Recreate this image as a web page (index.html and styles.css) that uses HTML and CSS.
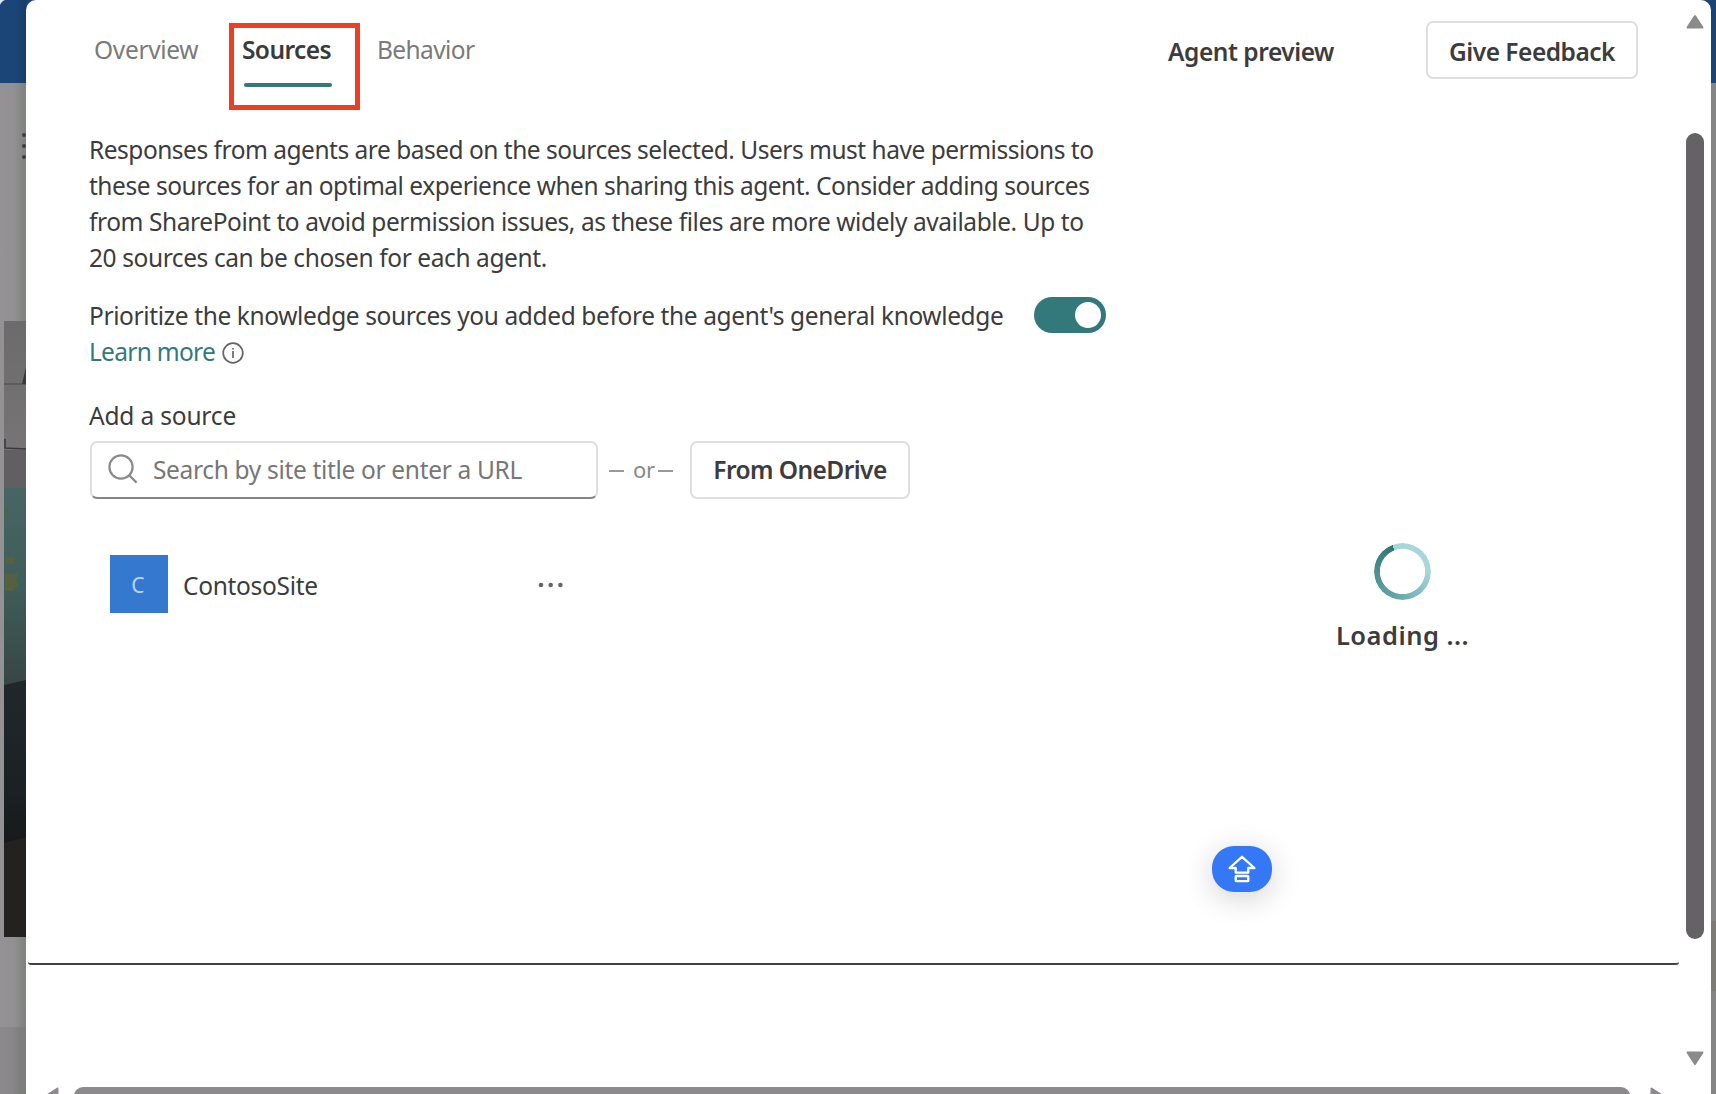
FILE: index.html
```html
<!DOCTYPE html>
<html lang="en">
<head>
<meta charset="utf-8">
<title>Agent sources</title>
<link rel="stylesheet" href="styles.css">
</head>
<body>
<div class="page">
  <aside class="backdrop">
    <div class="suite-bar"></div>
    <div class="rail"><svg class="rail-icon" viewBox="0 0 4 28"><circle cx="2" cy="3" r="2"/><circle cx="2" cy="14" r="2"/><circle cx="2" cy="25" r="2"/></svg></div>
    <svg class="photo" viewBox="0 0 22 616" preserveAspectRatio="none">
      <defs>
        <linearGradient id="wall" x1="0" y1="0" x2="0" y2="1"><stop offset="0" stop-color="#6c6b6b"/><stop offset="1" stop-color="#767475"/></linearGradient>
        <linearGradient id="teal" x1="0" y1="0" x2="0" y2="1"><stop offset="0" stop-color="#466564"/><stop offset=".5" stop-color="#3f5d59"/><stop offset="1" stop-color="#374644"/></linearGradient>
        <linearGradient id="dark" x1="0" y1="0" x2="0" y2="1"><stop offset="0" stop-color="#22272c"/><stop offset=".6" stop-color="#1b2226"/><stop offset="1" stop-color="#181818"/></linearGradient>
      </defs>
      <rect width="22" height="130" fill="url(#wall)"/>
      <path d="M0 63H22" stroke="#555455" stroke-width="1.5"/>
      <path d="M22 46V63H18Z" fill="#3a393a"/>
      <path d="M1 118V127L22 128" stroke="#3a383a" stroke-width="1.5" fill="none"/>
      <rect y="129" width="22" height="39" fill="#625f62"/>
      <rect y="167" width="22" height="198" fill="url(#teal)"/>
      <path d="M1 186l3 5-3 4M1 210l3 3M1 236h10v7H1zM1 253l14-1-3 6 2 6-6 6H1z" fill="#55603f"/>
      <path d="M0 364L22 359V530H0Z" fill="url(#dark)"/>
      <path d="M0 522L22 516V616H0Z" fill="#242220"/>
    </svg>
    <div class="rail-foot"></div>
  </aside>

  <main class="dialog">
    <div class="scroll-area">
      <section class="content">
        <div class="config">
          <nav class="tabs">
            <a class="tab overview">Overview</a>
            <a class="tab sources active">Sources<span class="highlight"></span></a>
            <a class="tab behavior">Behavior</a>
          </nav>
          <p class="intro">
            <span class="line l1">Responses from agents are based on the sources selected. Users must have permissions to</span>
            <span class="line l2">these sources for an optimal experience when sharing this agent. Consider adding sources</span>
            <span class="line l3">from SharePoint to avoid permission issues, as these files are more widely available. Up to</span>
            <span class="line l4">20 sources can be chosen for each agent.</span>
          </p>
          <div class="priority">
            <div class="priority-text">
              <span class="line l5">Prioritize the knowledge sources you added before the agent's general knowledge</span>
              <span class="learn"><a class="link">Learn more</a><svg class="info" viewBox="0 0 22 22"><circle cx="11" cy="11" r="9.8"/><path d="M11 6v1.6M11 9v7"/></svg></span>
            </div>
            <span class="toggle"><span class="knob"></span></span>
          </div>
          <label class="field-label">Add a source</label>
          <div class="source-row">
            <div class="search">
              <svg class="search-icon" viewBox="0 0 30 30"><circle cx="13" cy="13" r="11.6"/><path d="M21.2 21.2L28.6 28.6"/></svg>
              <span class="placeholder">Search by site title or enter a URL</span>
            </div>
            <div class="or"><i class="dash"></i><span class="or-text">or</span><i class="dash"></i></div>
            <button class="btn onedrive">From OneDrive</button>
          </div>
          <div class="source">
            <span class="tile">C</span>
            <span class="site-name">ContosoSite</span>
            <svg class="more" viewBox="0 0 26 6"><circle cx="3" cy="3" r="2.3"/><circle cx="12.7" cy="3" r="2.3"/><circle cx="22.4" cy="3" r="2.3"/></svg>
          </div>
        </div>
        <div class="preview">
          <header class="preview-head">
            <h2 class="preview-title">Agent preview</h2>
            <button class="btn feedback">Give Feedback</button>
          </header>
          <div class="loading">
            <div class="spinner"></div>
            <span class="loading-text">Loading ...</span>
          </div>
        </div>
      </section>
      <div class="vscroll">
        <svg class="arrow" viewBox="0 0 18 15"><path d="M9 2L16.5 13.5H1.5Z"/></svg>
        <div class="vthumb"></div>
        <svg class="arrow" viewBox="0 0 18 15"><path d="M9 13L16.5 1.5H1.5Z"/></svg>
      </div>
    </div>
    <div class="hscroll">
      <svg class="harrow" viewBox="0 0 15 18"><path d="M2 9L13.5 1.5V16.5Z"/></svg>
      <div class="hthumb"></div>
      <svg class="harrow" viewBox="0 0 15 18"><path d="M13 9L1.5 1.5V16.5Z"/></svg>
    </div>
    <button class="fab">
      <svg viewBox="0 0 28 28"><path d="M14 1.8L26.4 13H20.3V17.6H7.7V13H1.6Z"/><rect x="7.7" y="21" width="12.6" height="5.2" rx=".8"/></svg>
    </button>
  </main>

  <aside class="edge"><div class="edge-bar"></div><div class="edge-photo"></div></aside>
</div>
</body>
</html>
```
FILE: styles.css
```css
* { box-sizing: border-box; margin: 0; padding: 0; }
body {
  width: 1716px;
  height: 1094px;
  overflow: hidden;
  background: linear-gradient(#1b4375 83px, #858585 83px);
  font-family: "Noto Sans", "Open Sans", sans-serif;
  font-size: 24.5px;
  line-height: 36px;
  color: #3c3c3c;
  white-space: nowrap;
}
.page { display: grid; grid-template-columns: 26px 1685px 5px; height: 1094px; }

/* dimmed page behind the dialog */
.backdrop {
  display: flex;
  flex-direction: column;
  background: linear-gradient(90deg, #949294 0, #929092 55%, #858885 80%, #808080 100%);
  border-top-left-radius: 8px;
}
.suite-bar { height: 83px; background: radial-gradient(circle at 8px 8px, transparent 8px, #dfe5ec 9px) 0 0 / 8px 8px no-repeat, linear-gradient(90deg, #1b4477 60%, #193d6a); }
.rail { height: 238px; padding: 49px 0 0 22px; }
.rail-icon { display: block; width: 4px; height: 28px; fill: #3e3e3e; }
.photo { display: block; width: 22px; height: 616px; margin-left: 4px; }
.rail-foot { height: 67px; margin-top: 90px; background: linear-gradient(90deg, #8b898b 0, #888688 50%, #7e817e 70%, #7c7c7c 100%); }
.edge { display: flex; flex-direction: column; background: #858585; }
.edge-bar { height: 83px; background: #1b4375; }
.edge-photo { height: 70px; margin-top: 838px; background: #7c7b76; }

.dialog {
  position: relative;
  display: flex;
  flex-direction: column;
  height: 1094px;
  background: #fff;
  border-radius: 10px 10px 0 0;
  overflow: hidden;
}
.scroll-area { display: flex; height: 1087px; }
.content {
  display: grid;
  grid-template-columns: 1081px 1fr;
  width: 1651px;
  height: 965px;
  margin-left: 2px;
  border-bottom: 2px solid #444244;
  border-radius: 3px;
}
.config { padding: 32px 0 0 61px; }

.tabs { display: flex; height: 55px; padding-left: 5px; }
.tab { color: #7a7a7a; }
.overview { width: 148px; letter-spacing: -.33px; }
.sources { width: 135px; letter-spacing: -.6px; }
.behavior { letter-spacing: -.62px; }
.active { position: relative; color: #3a3a3a; font-weight: 600; }
.active::before {
  content: "";
  position: absolute;
  left: 2px;
  top: 51px;
  width: 88px;
  height: 4px;
  border-radius: 2px;
  background: #33797b;
}
.highlight { position: absolute; left: -13px; top: -9px; width: 131px; height: 87px; border: 5px solid #eb4026; }

.line { display: block; }
.intro { margin-top: 45px; }
.l1 { letter-spacing: -.492px; }
.l2 { letter-spacing: -.475px; }
.l3 { letter-spacing: -.43px; }
.l4 { letter-spacing: -.41px; }
.l5 { letter-spacing: -.384px; }

.priority { display: flex; justify-content: space-between; width: 1017px; margin-top: 21px; }
.priority-text { padding-top: 1px; }
.learn { display: flex; align-items: center; gap: 7px; }
.link { letter-spacing: -.72px; color: #33797b; }
.info { width: 22px; height: 22px; margin-top: 2px; fill: none; stroke: #666; stroke-width: 1.7; }
.toggle { display: flex; justify-content: flex-end; align-items: center; width: 72px; height: 36px; padding-right: 5px; border-radius: 18px; background: #33797b; }
.knob { width: 26px; height: 26px; border-radius: 50%; background: #fff; }

.field-label { display: block; margin-top: 28px; letter-spacing: -.18px; }
.source-row { display: flex; align-items: center; margin: 7px 0 0 1px; }
.search {
  display: flex;
  align-items: center;
  gap: 15px;
  width: 508px;
  height: 58px;
  padding-left: 16px;
  border: 2px solid #dedede;
  border-bottom-color: #858585;
  border-radius: 7px;
}
.search-icon { width: 30px; height: 30px; margin-bottom: 3px; fill: none; stroke: #8a8a8a; stroke-width: 2.2; }
.placeholder { letter-spacing: -.33px; color: #777; }
.or { display: flex; align-items: center; width: 92px; padding-left: 11px; font-size: 22px; color: #8a8a8a; }
.or-text { width: 28px; margin: -3px 0 0 9px; letter-spacing: -.2px; }
.dash { width: 15px; height: 2px; margin-top: 1px; background: #999; }
.dash + .or-text + .dash { margin-left: -3px; }
.btn { height: 58px; background: #fff; border: 2px solid #dedede; border-radius: 7px; font: 600 24.5px/36px "Noto Sans", sans-serif; color: #3c3c3c; }
.onedrive { width: 220px; letter-spacing: -.58px; }

.source { display: flex; align-items: center; width: 477px; margin: 56px 0 0 21px; }
.tile { width: 58px; height: 58px; padding-right: 2px; background: #3578d0; color: #b9d4f2; font-size: 21px; line-height: 60px; text-align: center; }
.site-name { flex: 1; padding: 3px 0 0 15px; letter-spacing: -.3px; }
.more { width: 26px; height: 6px; margin: 2px 23px 0 0; fill: #666; }

.preview { padding-top: 21px; }
.preview-head { display: flex; align-items: center; }
.preview-title { box-sizing: content-box; width: 258px; padding: 3px 0 0 59px; font-size: 24.5px; font-weight: 600; letter-spacing: -.46px; }
.feedback { flex: none; width: 212px; padding-top: 3px; letter-spacing: -.5px; }
.loading { display: flex; flex-direction: column; align-items: center; width: 132px; margin: 464px 0 0 227px; }
.spinner {
  width: 57px;
  height: 57px;
  border-radius: 50%;
  background: conic-gradient(#a9d6da 0 90deg, #7fb9bb 150deg, #62a4a6 200deg, #3f8587 300deg, #2f7577 339deg, #a9d6da 339deg);
  -webkit-mask: radial-gradient(circle, transparent 22.2px, #000 23px);
  mask: radial-gradient(circle, transparent 22.2px, #000 23px);
}
.loading-text { margin: 17px 0 0 1px; font-weight: 600; font-size: 25.5px; letter-spacing: .5px; }

.vscroll { display: flex; flex-direction: column; align-items: center; width: 18px; margin-left: 7px; padding-top: 14px; }
.arrow { width: 18px; height: 15px; fill: #8c8a8c; stroke: #8c8a8c; stroke-width: 2; stroke-linejoin: round; }
.vthumb { width: 18px; height: 806px; margin: 104px 0 112px; border-radius: 9px; background: #646264; }
.hscroll { display: flex; height: 7px; padding-left: 18px; overflow: hidden; }
.harrow { flex: none; width: 15px; height: 18px; fill: #8c8a8c; stroke: #8c8a8c; stroke-width: 2; stroke-linejoin: round; }
.hthumb { width: 1556px; height: 18px; margin: 0 20px 0 15px; border-radius: 9px; background: #8c8a8c; }

.fab {
  position: absolute;
  left: 1186px;
  top: 846px;
  display: flex;
  align-items: center;
  justify-content: center;
  width: 60px;
  height: 46px;
  border: 0;
  border-radius: 22px;
  background: #3478f6;
  box-shadow: 0 6px 30px rgba(0, 0, 0, .18);
}
.fab svg { width: 28px; height: 28px; margin-right: 1px; fill: none; stroke: #fff; stroke-width: 2.3; stroke-linejoin: round; }
```
